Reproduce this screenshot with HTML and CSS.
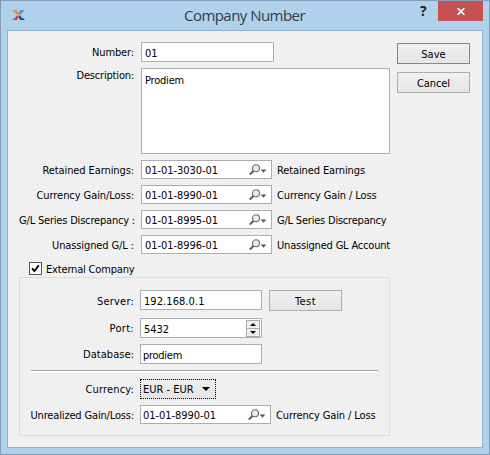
FILE: index.html
```html
<!DOCTYPE html>
<html lang="en">
<head>
<meta charset="utf-8">
<title>Company Number</title>
<link rel="stylesheet" href="styles.css">
</head>
<body>
<svg width="0" height="0" class="defs">
  <symbol id="lookup" viewBox="0 0 17 12">
    <path d="M.8 10.4 5 6.6" stroke="#5c5c5c" stroke-width="2" fill="none"/>
    <circle cx="7" cy="4.3" r="3.5" fill="#ececec" stroke="#6a6a6a" stroke-width="1.1"/>
    <path d="M12 5.5h5v1h-1v1h-1v1h-1v-1h-1v-1h-1z" fill="#555"/>
  </symbol>
</svg>
<div class="window">
  <header class="titlebar">
    <svg class="logo" width="13" height="11" viewBox="0 0 13 11">
      <path d="M0 0h4.5L7.5 4 6 6 3 2.5z" fill="#f08a35"/>
      <path d="M8.5 0H12.5L8 5 6.5 3.8z" fill="#4d91cf"/>
      <path d="M0 10h4.5L7 7 5.5 5 3 8z" fill="#e53a24"/>
      <path d="M5.5 5 7 3.8 8 5 6.5 7z" fill="#f4af91"/>
      <path d="M8 5 9.5 7.5 12.5 9v1H8.5L6.3 7z" fill="#2348a0"/>
    </svg>
    <h1><span data-w="121">Company Number</span></h1>
    <span class="help">?</span>
    <div class="close"><svg width="8" height="7" viewBox="0 0 8 7"><path d="M.7 .2 7.3 6.8M7.3 .2 .7 6.8" stroke="#fff" stroke-width="1.7"/></svg></div>
  </header>
  <main class="client">
    <section class="top">
      <div class="fields">
        <div class="row number"><label><span data-w="42">Number:</span></label><div class="input wide"><span data-w="12.5">01</span></div></div>
        <div class="row description"><label><span data-w="57.5">Description:</span></label><div class="input area"><span data-w="39">Prodiem</span></div></div>
      </div>
      <div class="buttons">
        <div class="button default"><span data-w="24.5">Save</span></div>
        <div class="button"><span data-w="33">Cancel</span></div>
      </div>
    </section>
    <section class="accounts">
      <div class="row"><label><span data-w="91.5">Retained Earnings:</span></label><div class="input cluster"><span data-w="73">01-01-3030-01</span><svg><use href="#lookup"/></svg></div><p><span data-w="88">Retained Earnings</span></p></div>
      <div class="row"><label><span data-w="97.5">Currency Gain/Loss:</span></label><div class="input cluster"><span data-w="73">01-01-8990-01</span><svg><use href="#lookup"/></svg></div><p><span data-w="99.5">Currency Gain / Loss</span></p></div>
      <div class="row"><label><span data-w="116">G/L Series Discrepancy :</span></label><div class="input cluster"><span data-w="73">01-01-8995-01</span><svg><use href="#lookup"/></svg></div><p><span data-w="109.5">G/L Series Discrepancy</span></p></div>
      <div class="row"><label><span data-w="82">Unassigned G/L :</span></label><div class="input cluster"><span data-w="73">01-01-8996-01</span><svg><use href="#lookup"/></svg></div><p><span data-w="113">Unassigned GL Account</span></p></div>
    </section>
    <div class="external">
      <div class="check"><svg width="11" height="11" viewBox="0 0 11 11"><path d="M2 5.3 4.4 8 8.8 2.2" fill="none" stroke="#000" stroke-width="1.9"/></svg></div>
      <span data-w="88.5">External Company</span>
    </div>
    <section class="group">
      <div class="row server"><label><span data-w="37">Server:</span></label><div class="input"><span data-w="60.5">192.168.0.1</span></div><div class="button"><span data-w="21">Test</span></div></div>
      <div class="row port"><label><span data-w="24.5">Port:</span></label><div class="input spin"><span data-w="25">5432</span>
        <div class="steps">
          <div><svg width="6" height="3" viewBox="0 0 6 3"><path d="M0 3 3 0l3 3z"/></svg></div>
          <div><svg width="6" height="3" viewBox="0 0 6 3"><path d="M0 0h6L3 3z"/></svg></div>
        </div></div></div>
      <div class="row database"><label><span data-w="51">Database:</span></label><div class="input"><span data-w="39">prodiem</span></div></div>
      <hr>
      <div class="row currency"><label><span data-w="48.5">Currency:</span></label><div class="combo"><span data-w="50.5">EUR - EUR</span><svg width="8" height="4" viewBox="0 0 8 4"><path d="M0 0h8L4 4z"/></svg></div></div>
      <div class="row unrealized"><label><span data-w="103.5">Unrealized Gain/Loss:</span></label><div class="input cluster"><span data-w="73">01-01-8990-01</span><svg><use href="#lookup"/></svg></div><p><span data-w="99.5">Currency Gain / Loss</span></p></div>
    </section>
  </main>
</div>
<script src="fit.js"></script>
</body>
</html>
```
FILE: styles.css
```css
* { box-sizing: border-box; }
body { margin: 0; font: 11px/13px "DejaVu Sans Condensed", "DejaVu Sans", sans-serif; font-stretch: condensed; color: #000; }
svg { display: block; flex: none; }
.defs { position: absolute; }
h1, p { margin: 0; font: inherit; }
span { white-space: nowrap; }

.window { width: 490px; height: 455px; padding: 0 6px 6px; background: #afd1ec; border: 1px solid #829eb8; }
.titlebar { height: 29px; display: flex; align-items: flex-start; }
.logo { margin: 9px 0 0 5px; }
h1 { width: 121px; margin: 4px 0 0 159px; font: 15px/20px "Open Sans", sans-serif; color: #343b42; }
.help { width: 8px; margin: 2px 0 0 115px; font: bold 14px/16px "Open Sans", sans-serif; color: #222; }
.close { width: 45px; height: 20px; margin-left: 10px; background: #c75050; display: flex; align-items: center; justify-content: center; }

.client { height: 418px; background: #f0f0f0; border: 1px solid #93b1ca; padding: 11px 12px 11px 11px; }
.row { display: flex; align-items: flex-start; }
label { width: 115px; margin-right: 7px; text-align: right; flex: none; }
.input { width: 122px; height: 20px; padding: 3px 0 0 3px; background: #fff; border: 1px solid #abadb3; display: flex; align-items: flex-start; flex: none; }
.button { width: 73px; height: 21px; border: 1px solid #acacac; background: linear-gradient(#f0f0f0, #e5e5e5); display: flex; justify-content: center; padding-top: 4px; }
.default { border-color: #3399ff; }

.top { display: flex; justify-content: space-between; }
.number label { padding-top: 4px; }
.number .input { width: 133px; padding-top: 4px; }
.description { margin-top: 6px; }
.description label { padding-top: 1px; }
.area { width: 249px; height: 86px; padding-top: 5px; }
.buttons { display: grid; gap: 8px; align-content: start; padding-top: 1px; }

.accounts { display: grid; gap: 6px; margin-top: 6px; }
.accounts label, .accounts p, .unrealized label, .unrealized p { padding-top: 4px; }
.cluster { width: 131px; height: 19px; justify-content: space-between; padding-right: 5px; }
.cluster svg { width: 17px; height: 12px; }
.row p { margin-left: 5px; }

.external { display: flex; gap: 4px; margin: 8px 0 0 10px; height: 13px; }
.external span { margin-top: 1px; }
.check { width: 13px; height: 13px; border: 1px solid #555; background: #fff; }

.group { width: 371px; height: 159px; margin-top: 2px; padding: 12px 11px 0; border: 1px solid #dcdcdc; }
.group label { width: 103px; margin-right: 6px; display: flex; justify-content: flex-end; }
.server label { padding-top: 5px; }
.server .input { padding-top: 4px; }
.server .button { margin-left: 7px; }
.port { margin-top: 7px; }
.port label { padding-top: 4px; }
.port .input { padding-top: 4px; }
.spin { justify-content: space-between; padding-right: 1px; }
.steps { width: 14px; height: 17px; margin-top: -3px; display: grid; grid-template-rows: 7px 8px; border: 1px solid #acacac; background: #f0f0f0; }
.steps div { display: flex; align-items: center; justify-content: center; }
.steps div + div { border-top: 1px solid #acacac; }
.database { margin-top: 6px; }
.database label { padding-top: 4px; }
.database .input { padding: 4px 0 0 2px; }
hr { height: 2px; margin: 6px 0 7px; border: 0; border-top: 1px solid #a0a0a0; background: #fff; }
.currency label { padding-top: 4px; }
.combo { width: 76px; height: 20px; padding: 3px 5px 0 2px; border: 1px dotted #000; outline: 0; background: linear-gradient(#eee, #e4e4e4); display: flex; justify-content: space-between; }
.combo svg { margin-top: 4px; }
.unrealized { margin-top: 6px; }
.unrealized .input { padding-left: 2px; }
```
FILE: fit.js
```js
// Tighten or loosen each caption to its nominal width in pixels.
document.querySelectorAll("[data-w]").forEach(function (el) {
  var gap = Number(el.dataset.w) - el.getBoundingClientRect().width;
  el.style.letterSpacing = gap / el.textContent.length + "px";
});
```
